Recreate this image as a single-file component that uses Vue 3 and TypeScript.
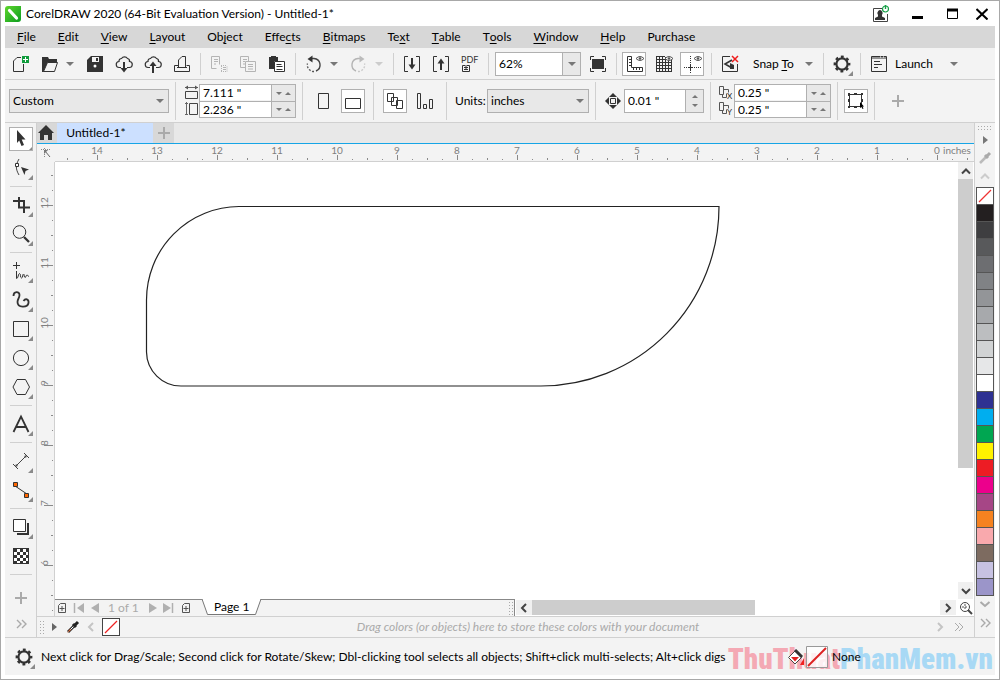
<script setup lang="ts">
import { ref } from 'vue'

const D = '#333'
const G = '#b4b4b4'

const eye = `<path d="M14 6.5q4-4 8 0q-4 4-8 0z" fill="#fff" stroke="#555"/><circle cx="18" cy="6.5" r="1.3" fill="#555"/>`
const gear = `<circle cx="13" cy="12" r="5.6" fill="none" stroke="${D}" stroke-width="2.2"/><circle cx="13" cy="12" r="7.2" fill="none" stroke="${D}" stroke-width="2.4" stroke-dasharray="2.83 2.83" stroke-dashoffset="1.4"/>`
const corner = `<path d="M24 19v5h-5z" fill="#8a8a8a"/>`
const cloud = `<path d="M10 15.500H8.500a3 3 0 0 1-.5-6a2.600 2.600 0 0 1 2.500-3a3.600 3.600 0 0 1 6 0a2.600 2.600 0 0 1 2 3a3 3 0 0 1-.5 6h-2" fill="none" stroke="${D}" stroke-width="1.200"/>`

const icons: Record<string, string> = {
  new: `<path d="M13 5.500H9L5.500 9v10.500h10V12" fill="none" stroke="${D}"/><path d="M14 4h7v7h-7z" fill="#109c3c"/><path d="M17.500 5v5M15 7.500h5" stroke="#fff"/>`,
  open: `<path d="M5 5h6l1 2h8v3.500H11L7 20H5z" fill="${D}"/><path d="M10.500 10.500h10l-3 9h-11z" fill="#f3f3f3" stroke="${D}"/>`,
  save: `<path d="M9 4h12v16H5V8z" fill="${D}"/><path d="M10 5h7v5h-7z" fill="#f3f3f3"/><path d="M14 6h2v3h-2z" fill="${D}"/><circle cx="13" cy="14" r="1.500" fill="#fff"/>`,
  cloudDown: cloud + `<path d="M13 10v8" stroke="${D}" stroke-width="2"/><path d="M9.500 16h7l-3.500 4.500z" fill="${D}"/>`,
  cloudUp: cloud + `<path d="M13 13v8" stroke="${D}" stroke-width="2"/><path d="M9.500 14h7L13 9.500z" fill="${D}"/>`,
  print: `<path d="M9.500 13.500h-4v6h15v-6h-3" fill="none" stroke="${D}"/><path d="M8 15.500h10" stroke="${D}"/><path d="M9.500 15V8l3.500-3.500h3.500V15" fill="#f3f3f3" stroke="${D}"/>`,
  cut: `<path d="M10.500 16.500h-5v-12h8v8M8 7.500h4M8 9.500h4M8 12h2" fill="none" stroke="${G}"/><path d="M15.500 14v6M21 14.500v6M15 19.500h6M15 13.500h6" stroke="${G}" stroke-dasharray="1 1"/><path d="M17 15.500h3M17 17.500h3" stroke="${G}"/>`,
  copy: `<path d="M10 15.500H5.500v-11h8V9M8 7.500h4M8 9.500h2M8 12h2M10.500 9.500h10v10h-10zM13 12.500h5M13 14.500h5M13 17h5" fill="none" stroke="${G}"/>`,
  paste: `<path d="M5 5h2V4h5v1h2v4h-4v8H5z" fill="${D}"/><path d="M10.500 9.500h10v10h-10z" fill="#fff" stroke="${D}"/><path d="M12.500 12.500h5M12.500 14.500h6M12.500 17.500h6" stroke="${D}"/>`,
  undo: `<path d="M9.500 6.500h3.500a6.500 6.500 0 0 1 2 12.500" fill="none" stroke="#444" stroke-width="1.400"/><path d="M13 19.500a6.500 6.500 0 0 1-6.500-8" fill="none" stroke="#555" stroke-width="1.300" stroke-dasharray="2 1.500"/><path d="M6.500 7l5-3.500v7z" fill="${D}"/>`,
  redo: `<path d="M15.500 6.500H12a6.500 6.500 0 0 0-2 12.500" fill="none" stroke="${G}" stroke-width="1.400"/><path d="M12 19.500a6.500 6.500 0 0 0 6.500-8" fill="none" stroke="#c8c8c8" stroke-width="1.300" stroke-dasharray="2 1.500"/><path d="M18.500 7l-5-3.500v7z" fill="#bbb"/>`,
  import: `<path d="M9 4.500H5.500v15H9M17 4.500h3.500v15H17" fill="none" stroke="${D}"/><path d="M13 6v9" stroke="${D}" stroke-width="2"/><path d="M9.500 12.500h7L13 17.500z" fill="${D}"/>`,
  export: `<path d="M9 4.500H5.500v15H9M17 4.500h3.500v15H17" fill="none" stroke="${D}"/><path d="M13 9v9" stroke="${D}" stroke-width="2"/><path d="M9.500 11.500h7L13 6.500z" fill="${D}"/>`,
  pdf: `<text x="4" y="11" font-size="9" fill="${D}">PDF</text><path d="M8 13.500H5.500v6h7v-6H10" fill="none" stroke="${D}"/><path d="M9 13v5M7 15.500h4M7 17.500h4" stroke="${D}"/>`,
  full: `<path d="M7 7h12v10H7z" fill="${D}"/><path d="M5.500 8V4.500H9M17 4.500h3.500V8M20.500 16v3.500H17M9 19.500H5.500V16" fill="none" stroke="${D}"/>`,
  rulers: `<path d="M5.500 4.500h4v11h11v4h-15z" fill="none" stroke="${D}"/><path d="M7 7.500h2M7 10.500h2M7 13.500h2M11.500 16v2M14.500 16v2M17.500 16v2" stroke="${D}"/>` + eye,
  grid: `<path d="M5 7.500h16M5 10.500h16M5 13.500h16M5 16.500h16M5 19.500h16M5.500 5v15M8.500 5v15M11.500 5v15M14.500 5v15M17.500 5v15M20.500 7v13M5 4.500h9" stroke="${D}"/>` + eye,
  guides: `<path d="M10.500 4v17M4 15.500h17" stroke="${D}" stroke-dasharray="1 1"/><path d="M8 15.500h5M10.500 13v5" stroke="${D}"/>` + eye,
  snapOff: `<path d="M13 4.500H5.500v15h15V12" fill="none" stroke="${D}"/><path d="M15 8l-7 4 7 4" fill="none" stroke="${D}" stroke-width="1.600"/><path d="M13 11l4 2v4h-4z" fill="${D}"/><path d="M15 4l6 6M21 4l-6 6" stroke="#ee1c1c" stroke-width="1.500"/>`,
  launch: `<path d="M5.500 4.500h15v15h-15z" fill="none" stroke="${D}"/><path d="M5 6h16M8 9.500h6M8 12.500h8M8 15.500h4" stroke="${D}"/><path d="M14 5h1M17 5h1" stroke="#fff"/>`,
  portrait: `<path d="M6.500 4.500h10v15h-10z" fill="none" stroke="${D}"/>`,
  landscape: `<path d="M4.500 9.500h15v10h-15z" fill="none" stroke="${D}"/>`,
  pages: `<path d="M4.500 4.500h6v8h-6zM8.500 8.500h6v8h-6zM13.500 11.500h6v8h-6z" fill="#fff" stroke="${D}"/>`,
  bars: `<path d="M5.500 4.500h3v15h-3zM11.500 15.500h3v4h-3zM17.500 10.500h3v9h-3z" fill="none" stroke="${D}"/>`,
  nudge: `<path d="M8.500 9.500h5v5h-5z" fill="none" stroke="${D}"/><path d="M11 4l4 4H7zM11 20l4-4H7zM3 12l4-4v8zM19 12l-4-4v8z" fill="${D}"/>`,
  bounds: `<path d="M5.500 5.500h12v12h-12z" fill="none" stroke="${D}"/><path d="M4 4h2v3H4zM17 4h2v2h-2zM4 17h2v2H4zM10 4h3v1h-3zM10 18h3v1h-3zM4 10h1v3H4zM18 10h1v3h-1z" fill="${D}"/><path d="M16 13l4 4.500h-1.500l1 2-1 .5-1-2-1.500 1z" fill="#000"/>`,
  plus: `<path d="M12 6v12M6 12h12" stroke="#aaa" stroke-width="2"/>`,
  pick: `<path d="M8 3l8.500 9.500h-3.800l2.300 5.500-2.500 1-2.300-5.500L8 16z" fill="${D}"/>` + corner,
  shape: `<path d="M10 3C6.500 9 6.500 13 10 19" fill="none" stroke="#444"/><path d="M6.500 7.500h3v3h-3z" fill="#fff" stroke="${D}"/><path d="M12 11l8 2.500-3.500 1.500-1 4z" fill="${D}"/>` + corner,
  crop: `<path d="M4 8h11v12M10 4v10.500h11M4 8h11" fill="none" stroke="${D}" stroke-width="2"/>` + corner,
  zoom: `<circle cx="10.500" cy="10" r="6.300" fill="none" stroke="${D}"/><path d="M15 15l5 5" stroke="${D}" stroke-width="2.300"/>` + corner,
  freehand: `<path d="M7.500 3v7M4 6.500h7" stroke="${D}"/><path d="M7.500 12v7.500c2 0 1.500-5 3-5s.5 4.500 2 4.500 1-4 2-4 .5 3.500 1.500 3.500 1-2.500 2-2.500 1 1.500 2 1.500" fill="none" stroke="${D}"/>` + corner,
  artistic: `<path d="M4.500 8c0-5 6-5 6-1 0 3-2 4-2 7 0 6 10 6 11 1 .5-4-3-5-5-2" fill="none" stroke="${D}" stroke-width="1.800"/>` + corner,
  rect: `<path d="M4.500 4.500h15v15h-15z" fill="none" stroke="${D}"/>` + corner,
  ellipse: `<circle cx="12" cy="12" r="7.600" fill="none" stroke="${D}"/>` + corner,
  polygon: `<path d="M8 4.500h8.500l4 7.500-4 7.500H8L4 12z" fill="none" stroke="${D}"/>` + corner,
  text: `<path d="M4.500 20L12 4.500 19.500 20M7.500 15h9" fill="none" stroke="${D}" stroke-width="1.800"/>` + corner,
  dimension: `<path d="M6.500 17.500l11-11M4 15l5 5M15 4l5 5" stroke="#444"/><path d="M6 18l1-3 2 2zM18 6l-3 1 2 2z" fill="#444"/>` + corner,
  connector: `<path d="M6 8l12 8" stroke="${D}"/><path d="M4.500 4.500h4v4h-4zM15.500 15.500h4v4h-4z" fill="#f60" stroke="${D}"/>` + corner,
  shadow: `<path d="M8 19h11V8" fill="none" stroke="${D}" stroke-width="2"/><path d="M4.500 4.500h12v12h-12z" fill="#fff" stroke="${D}"/>` + corner,
  pattern: `<path d="M4 4h16v16H4z" fill="${D}"/><path d="M8 5h3v3H8zM14 5h3v3h-3zM5 8h3v3H5zM11 8h3v3h-3zM17 8h2v3h-2zM8 11h3v3H8zM14 11h3v3h-3zM5 14h3v3H5zM11 14h3v3h-3zM17 14h2v3h-2zM8 17h3v2H8zM14 17h3v2h-3z" fill="#fff"/>`,
  more: `<path d="M8 8l4 4-4 4M13 8l4 4-4 4" fill="none" stroke="#aaa" stroke-width="1.400"/>`,
  moreDown: `<path d="M7.500 9l4.500 4 4.500-4" fill="none" stroke="#aaa" stroke-width="2"/>`,
  gear: gear + corner,
}

interface Tool { icon?: string; label?: string; caret?: boolean; dim?: boolean; boxed?: boolean }
const fileTools: Tool[] = [
  { icon: 'new', label: 'New' }, { icon: 'open', label: 'Open', caret: true }, { icon: 'save', label: 'Save' },
  { icon: 'cloudDown', label: 'Open from cloud' }, { icon: 'cloudUp', label: 'Save to cloud' }, { icon: 'print', label: 'Print' },
  {}, { icon: 'cut', label: 'Cut' }, { icon: 'copy', label: 'Copy' }, { icon: 'paste', label: 'Paste' },
  {}, { icon: 'undo', label: 'Undo', caret: true }, { icon: 'redo', label: 'Redo', caret: true, dim: true },
  {}, { icon: 'import', label: 'Import' }, { icon: 'export', label: 'Export' }, { icon: 'pdf', label: 'Publish to PDF' }, {},
]
const viewTools: Tool[] = [
  { icon: 'full', label: 'Full-screen preview' }, {},
  { icon: 'rulers', label: 'Show rulers', boxed: true }, { icon: 'grid', label: 'Show grid' }, { icon: 'guides', label: 'Show guidelines', boxed: true }, {},
  { icon: 'snapOff', label: 'Snap off' },
]
const toolbox = ['pick', 'shape', '', 'crop', 'zoom', '', 'freehand', 'artistic', 'rect', 'ellipse', 'polygon', '', 'text', '', 'dimension', 'connector', '', 'shadow', 'pattern', '']

const menus = ['_File', '_Edit', '_View', '_Layout', 'Ob_ject', 'Effe_cts', '_Bitmaps', 'Te_xt', '_Table', 'T_ools', '_Window', '_Help', 'Purchase'].map((m) => {
  const at = m.indexOf('_')
  return at < 0 ? { a: m, u: '', b: '' } : { a: m.slice(0, at), u: m[at + 1], b: m.slice(at + 2) }
})

const swatches = ['none', '#231f20', '#3e3e40', '#58595b', '#6d6e71', '#808285', '#939598', '#a7a9ac', '#bcbec0', '#d1d3d4', '#e6e7e8', '#ffffff', '#2e3192', '#00aeef', '#00a651', '#fff200', '#ed1c24', '#ec008c', '#a64686', '#f58220', '#f9a9ad', '#7d6b60', '#c7c2e2', '#9b95c9']

const zoomLevel = ref('62%')
const size = ref({ w: '7.111 "', h: '2.236 "' })
const offset = ref({ x: '0.25 "', y: '0.25 "' })
const nudge = ref('0.01 "')

const unit = 60
const hMajor = Array.from({ length: 15 }, (_, i) => ({ n: 14 - i, x: 42 + i * unit }))
const hMinor = Array.from({ length: 62 }, (_, i) => i).filter((i) => (i - 2) % 4 !== 0).map((i) => ({ x: 12 + i * 15, tall: i % 2 === 0 }))
const vMajor = Array.from({ length: 7 }, (_, i) => ({ n: 12 - i, y: 43 + i * unit }))
const vMinor = Array.from({ length: 31 }, (_, i) => i).filter((i) => (i - 2) % 4 !== 0).map((i) => ({ y: 13 + i * 15, tall: i % 2 === 0 }))
</script>

<template>
  <div class="window">
    <header class="title">
      <svg class="logo" viewBox="0 0 16 16" width="16" height="16">
        <defs><linearGradient id="lg" x1="0" y1="0" x2="1" y2="1"><stop offset="0" stop-color="#5fd62c" /><stop offset="1" stop-color="#0c9c20" /></linearGradient></defs>
        <path d="M3 0h13v13a3 3 0 0 1-3 3H0V3a3 3 0 0 1 3-3z" fill="url(#lg)" />
        <path d="M4.500 4.500l7 7.500" stroke="#fff" stroke-width="3.200" stroke-linecap="round" />
      </svg>
      <h1>CorelDRAW 2020 (64-Bit Evaluation Version) - Untitled-1*</h1>
      <button class="user" aria-label="Account">
        <svg width="18" height="18" viewBox="0 0 18 18"><path d="M10 3.500H1.500v13h14V9" fill="none" stroke="#444" /><path d="M3 15v-2l3-1.500V10a2.600 3 0 1 1 4 0v1.500l3 1.500v2z" fill="#333" /><circle cx="13.500" cy="4" r="3" fill="#fff" stroke="#18a048" stroke-width="1.200" /><path d="M13.500 0v4" stroke="#18a048" stroke-width="1.400" /></svg>
      </button>
      <button class="win min" aria-label="Minimize"><svg width="12" height="12"><path d="M0 9.500h11" stroke="#000" stroke-width="3" /></svg></button>
      <button class="win max" aria-label="Maximize"><svg width="12" height="12"><path d="M.5 1.500h10v9H.5z" fill="none" stroke="#000" /><path d="M0 2h11" stroke="#000" stroke-width="3" /></svg></button>
      <button class="win close" aria-label="Close"><svg width="12" height="12"><path d="M.5 1l11 10.500M11.500 1L.5 11.500" stroke="#000" stroke-width="2" /></svg></button>
    </header>

    <nav class="menubar">
      <button v-for="m in menus" :key="m.a + m.b">{{ m.a }}<u>{{ m.u }}</u>{{ m.b }}</button>
    </nav>

    <div class="toolbar">
      <template v-for="(t, i) in fileTools" :key="i">
        <i v-if="!t.icon" class="sep" />
        <template v-else>
          <button class="tool" :aria-label="t.label"><svg viewBox="0 0 24 24" v-html="icons[t.icon]" /></button>
          <button v-if="t.caret" class="caret" :class="{ dim: t.dim }" :aria-label="t.label + ' options'"><i /></button>
        </template>
      </template>
      <label class="zoombox">
        <input v-model="zoomLevel" aria-label="Zoom level" />
        <button aria-label="Zoom levels"><i class="tri" /></button>
      </label>
      <template v-for="(t, i) in viewTools" :key="'v' + i">
        <i v-if="!t.icon" class="sep" />
        <button v-else class="tool" :class="{ boxed: t.boxed }" :aria-label="t.label"><svg viewBox="0 0 24 24" v-html="icons[t.icon]" /></button>
      </template>
      <button class="wide snap"><span>Snap <u>T</u>o</span><i class="tri" /></button>
      <i class="sep" />
      <button class="tool" aria-label="Options"><svg viewBox="0 0 24 24" v-html="icons.gear" /></button>
      <i class="sep" />
      <button class="tool" aria-label="Application launcher"><svg viewBox="0 0 24 24" v-html="icons.launch" /></button>
      <button class="wide launch"><span>Launch</span><i class="tri" /></button>
    </div>

    <div class="props">
      <div class="pick preset"><select aria-label="Page size"><option>Custom</option></select><i class="tri" /></div>
      <i class="vline" />
      <div class="pair">
        <svg width="14" height="32" viewBox="0 0 14 32">
          <path d="M.5 6.500h12v7H.5zM4.500 18.500h8v11h-8z" fill="none" stroke="#444" />
          <path d="M0 2.500h13M1.500 17v13" stroke="#666" /><path d="M3 .5v4L0 2.500zM10 .5v4l3-2z" fill="#555" /><path d="M0 18.500h3M0 29.500h3" stroke="#666" />
        </svg>
        <div class="double">
          <div><input v-model="size.w" aria-label="Page width" /><span class="spin"><i class="tri s" /><i class="tri s up" /></span></div>
          <div><input v-model="size.h" aria-label="Page height" /><span class="spin"><i class="tri s" /><i class="tri s up" /></span></div>
        </div>
      </div>
      <i class="vline" />
      <button class="prop" aria-label="Portrait"><svg viewBox="0 0 24 24" v-html="icons.portrait" /></button>
      <button class="prop boxed" aria-label="Landscape"><svg viewBox="0 0 24 24" v-html="icons.landscape" /></button>
      <i class="vline" />
      <button class="prop boxed" aria-label="All pages"><svg viewBox="0 0 24 24" v-html="icons.pages" /></button>
      <button class="prop last" aria-label="Current page"><svg viewBox="0 0 24 24" v-html="icons.bars" /></button>
      <i class="vline" />
      <label class="units" for="units">Units:</label>
      <div class="pick unit"><select id="units"><option>inches</option></select><i class="tri" /></div>
      <i class="vline" />
      <svg class="nudge-icon" viewBox="0 0 22 24" v-html="icons.nudge" />
      <div class="single"><input v-model="nudge" aria-label="Nudge distance" /><span class="spin col"><i class="tri s up" /><i class="tri s" /></span></div>
      <i class="vline" />
      <div class="pair dup">
        <svg width="14" height="32" viewBox="0 0 14 32">
          <path v-for="k in [0, 16]" :key="k" fill="none" stroke="#555" :d="`M.5 ${k + 1.5}h4v8h-4zM4.500 ${k + 4.5}h5v3M3.500 ${k + 10}v2.500h4v-4`" />
          <text x="8" y="14" font-size="8" fill="#222">X</text><text x="8" y="30" font-size="8" fill="#222">Y</text>
        </svg>
        <div class="double">
          <div><input v-model="offset.x" aria-label="Duplicate distance X" /><span class="spin"><i class="tri s" /><i class="tri s up" /></span></div>
          <div><input v-model="offset.y" aria-label="Duplicate distance Y" /><span class="spin"><i class="tri s" /><i class="tri s up" /></span></div>
        </div>
      </div>
      <i class="vline" />
      <button class="prop boxed only" aria-label="Treat as filled"><svg viewBox="0 0 24 24" v-html="icons.bounds" /></button>
      <i class="vline" />
      <button class="prop add" aria-label="Customize"><svg viewBox="0 0 24 24" v-html="icons.plus" /></button>
    </div>

    <main class="work">
      <aside class="toolbox">
        <template v-for="(t, i) in toolbox" :key="i">
          <i v-if="!t" class="hline" />
          <button v-else :class="{ boxed: i === 0 }" :aria-label="t + ' tool'"><svg viewBox="0 0 24 24" v-html="icons[t]" /></button>
        </template>
        <button class="addtool" aria-label="Add tools"><svg viewBox="0 0 24 24" v-html="icons.plus" /></button>
        <button class="moretool" aria-label="More tools"><svg viewBox="0 0 24 24" v-html="icons.more" /></button>
      </aside>

      <section class="center">
        <div class="tabs">
          <button class="home" aria-label="Welcome"><svg width="20" height="20" viewBox="0 0 20 20"><path d="M9 2l8 8h-2v7h-4v-5H7v5H3v-7H1z" fill="#333" /></svg></button>
          <button class="doc">Untitled-1*</button>
          <button class="newtab" aria-label="New document"><svg width="20" height="20" viewBox="0 0 20 20"><path d="M10 4v12M4 10h12" stroke="#aaa" stroke-width="2" /></svg></button>
        </div>

        <div class="ruled">
          <div class="origin"><svg width="17" height="17" viewBox="0 0 17 17"><path d="M4 5.500h10M7.500 4v10" stroke="#888" stroke-dasharray="1 1" /><path d="M8 7l5 6" stroke="#666" /><path d="M7 6h4l-4 4z" fill="#777" /></svg></div>
          <div class="hruler">
            <svg width="100%" height="17">
              <g stroke="#8a8a8a" shape-rendering="crispEdges">
                <path v-for="t in hMajor" :key="'a' + t.n" :d="`M${t.x + 0.5} 11v5`" />
                <path v-for="t in hMinor" :key="'b' + t.x" :d="`M${t.x + 0.5} ${t.tall ? 14 : 15}v${t.tall ? 2 : 1}`" />
              </g>
              <text v-for="t in hMajor" :key="'t' + t.n" :x="t.x" y="10" text-anchor="middle">{{ t.n }}</text>
              <text x="888" y="10">inches</text>
            </svg>
          </div>
          <div class="vruler">
            <svg width="17" height="100%">
              <g stroke="#8a8a8a" shape-rendering="crispEdges">
                <path v-for="t in vMajor" :key="'a' + t.n" :d="`M7 ${t.y + 0.5}h9`" />
                <path v-for="t in vMinor" :key="'b' + t.y" :d="`M${t.tall ? 14 : 15} ${t.y + 0.5}h${t.tall ? 2 : 1}`" />
              </g>
              <text v-for="t in vMajor" :key="'t' + t.n" :transform="`translate(11 ${t.y - 2}) rotate(-90)`" text-anchor="middle">{{ t.n }}</text>
            </svg>
          </div>
          <div class="sheet">
            <svg class="drawing" width="100%" height="100%">
              <path d="M184 44.500H664A178 179.500 0 0 1 486 224H126A34.500 34.500 0 0 1 91.500 190V138A93 93.500 0 0 1 184 44.500Z" fill="none" stroke="#222" stroke-width="1.200" />
            </svg>
            <div class="vscroll">
              <button aria-label="Scroll up"><svg width="10" height="8"><path d="M1 6.500l4-4 4 4" /></svg></button>
              <div class="vthumb" /><div class="vrest" />
              <button aria-label="Scroll down"><svg width="10" height="8"><path d="M1 2l4 4 4-4" /></svg></button>
            </div>
          </div>
          <div class="pagebar">
            <div class="pagenav">
              <button aria-label="Add page before"><svg width="10" height="12"><path d="M3.500 1.500h5v9h-7v-7z" fill="none" stroke="#555" /><path d="M5 4v5M2.500 6.500h5" stroke="#555" /></svg></button>
              <button aria-label="First page"><svg width="12" height="12"><path d="M1.500 1v10" stroke="#b0b0b0" stroke-width="1.500" /><path d="M11 1v10L4 6z" fill="#b0b0b0" /></svg></button>
              <button aria-label="Previous page"><svg width="8" height="12"><path d="M8 1v10L0 6z" fill="#b0b0b0" /></svg></button>
              <span>1 of 1</span>
              <button aria-label="Next page"><svg width="8" height="12"><path d="M0 1v10l8-5z" fill="#b0b0b0" /></svg></button>
              <button aria-label="Last page"><svg width="12" height="12"><path d="M9.500 1v10" stroke="#b0b0b0" stroke-width="1.500" /><path d="M0 1v10l8-5z" fill="#b0b0b0" /></svg></button>
              <button aria-label="Add page after"><svg width="10" height="12"><path d="M3.500 1.500h5v9h-7v-7z" fill="none" stroke="#555" /><path d="M5 4v5M2.500 6.500h5" stroke="#555" /></svg></button>
              <button class="pagetab">
                <svg width="60" height="17" viewBox="0 0 60 17"><path d="M0 0L5.500 15.500H53.500L59 0" fill="#fff" stroke="#777" /></svg>
                <span>Page 1</span>
              </button>
              <i class="grip" />
            </div>
            <div class="hscroll">
              <button aria-label="Scroll left"><svg width="8" height="10"><path d="M6 1L2 5l4 4" /></svg></button>
              <div class="hthumb" /><div class="hrest" />
              <button aria-label="Scroll right"><svg width="8" height="10"><path d="M2 1l4 4-4 4" /></svg></button>
            </div>
            <button class="navigator" aria-label="Navigator"><svg width="14" height="14"><circle cx="6" cy="6" r="4.500" fill="none" stroke="#444" /><path d="M6 3v6M3 6h6" stroke="#555" stroke-dasharray="2 1" /><path d="M9 9l4 4" stroke="#444" stroke-width="2" /></svg></button>
          </div>
        </div>

        <div class="docpalette">
          <i class="grip" />
          <button aria-label="Palette menu"><svg width="5" height="8"><path d="M0 0v8l5-4z" fill="#666" /></svg></button>
          <button class="dropper" aria-label="Eyedropper"><svg width="14" height="14" viewBox="0 0 14 14"><path d="M2 12l7-7" stroke="#333" stroke-width="3" /><path d="M2.500 11.500l6-6" stroke="#fff" /><path d="M1 13l4-3-1-1z" fill="#e05a20" /><path d="M7 4l3 3M9 5l3-3" stroke="#222" stroke-width="3" /></svg></button>
          <button aria-label="Previous colors"><svg width="8" height="10"><path d="M6 1L2 5l4 4" fill="none" stroke="#c4c4c4" stroke-width="2" /></svg></button>
          <button class="nocolor" aria-label="No color"><svg width="16" height="16"><path d="M2 14L14 2" stroke="#ee2222" stroke-width="1.200" /></svg></button>
          <em>Drag colors (or objects) here to store these colors with your document</em>
          <button aria-label="Next colors"><svg width="8" height="10"><path d="M2 1l4 4-4 4" fill="none" stroke="#c4c4c4" stroke-width="2" /></svg></button>
          <button class="expand" aria-label="Expand palette"><svg width="10" height="8"><path d="M1 0l4 4-4 4M5 0l4 4-4 4" fill="none" stroke="#aaa" /></svg></button>
        </div>
      </section>

      <aside class="palette">
        <i class="grip flat" />
        <button aria-label="Palette options"><svg width="5" height="8"><path d="M0 0v8l5-4z" fill="#777" /></svg></button>
        <button aria-label="Pick a color"><svg width="14" height="14"><path d="M2 12l7-7" stroke="#bbb" stroke-width="2.500" /><path d="M7 4l3 3M9 5l3-3" stroke="#aaa" stroke-width="3" /></svg></button>
        <button aria-label="Scroll colors up"><svg width="10" height="8"><path d="M1 6.500l4-4 4 4" fill="none" stroke="#ccc" stroke-width="2" /></svg></button>
        <div class="swatches">
          <button v-for="c in swatches" :key="c" :aria-label="'Color ' + c" :style="{ backgroundColor: c === 'none' ? '#fff' : c }">
            <svg v-if="c === 'none'" width="16" height="16"><path d="M2 14L14 2" stroke="#ee3333" stroke-width="1.200" /></svg>
          </button>
        </div>
        <button class="palend" aria-label="Scroll colors down"><svg viewBox="0 0 24 24" v-html="icons.moreDown" /></button>
        <button class="palend" aria-label="Expand colors"><svg viewBox="0 0 24 24" v-html="icons.more" /></button>
      </aside>
    </main>

    <footer class="status">
      <span class="watermark"><b>ThuThuat</b><b class="blue">PhanMem.vn</b></span>
      <button aria-label="Status options"><svg viewBox="0 0 24 24" v-html="icons.gear" /></button>
      <p>Next click for Drag/Scale; Second click for Rotate/Skew; Dbl-clicking tool selects all objects; Shift+click multi-selects; Alt+click digs</p>
      <div class="fill">
        <svg width="16" height="16"><path d="M7 2l6.500 6.500L7 15 .5 8.500z" fill="#fff" stroke="#444" /><path d="M7 1l7 7" stroke="#333" stroke-width="3" /><path d="M3 8h8l-4 4.500z" fill="#e02020" /><path d="M16 9v7h-4z" fill="#f02020" /></svg>
        <svg width="22" height="22"><path d="M.5.5h21v21H.5z" fill="#fff" fill-opacity=".8" stroke="#999" /><path d="M2 20L20 2" stroke="#d22" stroke-width="2" /></svg>
        <span>None</span>
      </div>
    </footer>
  </div>
</template>

<style>
body { margin: 0; background: #fff; }
</style>

<style scoped>
.window { --edge: #d0d0d0; --box: #b0b0b0; box-sizing: border-box; height: 100vh; min-height: 600px; padding: 0 4px 4px; border: 1px solid #a8a8a8; background: #fff; display: flex; flex-direction: column; font: 12px/16px Lato, "Open Sans", sans-serif; color: #000; overflow: hidden; }
* { box-sizing: border-box; }
button { appearance: none; border: 0; padding: 0; margin: 0; background: none; font: inherit; color: inherit; display: flex; align-items: center; justify-content: center; flex: none; }
input, select { appearance: none; font: inherit; color: inherit; border: 0; border-radius: 0; background: #fff; padding: 0 3px; margin: 0; min-width: 0; outline: 0; }
svg { display: block; flex: none; }
u { text-underline-offset: 2px; }

.title { height: 25px; flex: none; display: flex; align-items: center; }
.title h1 { font: inherit; margin: 0 auto 0 5px; }
.title .user { margin-right: 22px; }
.title .min { margin-right: 23px; }
.title .max { margin-right: 17px; }
.title .close { margin-right: 7px; }

.menubar { height: 22px; flex: none; background: #d7d7d7; display: flex; align-items: center; gap: 22px; padding-left: 12px; }

.toolbar { height: 32px; flex: none; background: #f3f3f3; border-bottom: 1px solid var(--edge); display: flex; align-items: center; padding-left: 1px; }
.tool { width: 29px; height: 24px; padding: 0 3px 0 2px; }
.tool svg, .prop svg, .toolbox svg, .status button svg { width: 24px; height: 24px; }
.boxed svg { background: #fff; outline: 1px solid var(--box); outline-offset: -1px; }
.sep { width: 8px; height: 22px; flex: none; background: linear-gradient(var(--edge), var(--edge)) 4px 0 / 1px 100% no-repeat; }
.caret { width: 16px; height: 24px; padding-left: 2px; justify-content: flex-start; }
.tri, .caret i { width: 0; height: 0; flex: none; border: 4px solid transparent; border-top-color: #777; border-bottom: 0; }
.caret.dim i { border-top-color: #ccc; }
.zoombox { width: 86px; height: 24px; margin: 0 2px 0 3px; border: 1px solid var(--box); display: flex; }
.zoombox input { flex: 1; width: 0; }
.zoombox button { width: 18px; background: #e8e8e8; border-left: 1px solid var(--box); }
.wide { justify-content: space-between; height: 24px; white-space: nowrap; }
.snap { width: 60px; margin: 0 6px 0 9px; }
.launch { width: 63px; margin-left: 2px; }

.props { height: 43px; flex: none; background: #f3f3f3; border-bottom: 1px solid var(--edge); display: flex; align-items: center; padding-left: 4px; }
.vline { width: 1px; height: 38px; flex: none; background: var(--edge); margin: 0 6px; }
.pick { height: 24px; border: 1px solid var(--box); background: #e8e8e8; display: flex; align-items: center; padding-right: 4px; flex: none; }
.pick select { flex: 1; height: 22px; background: transparent; }
.preset { width: 160px; }
.unit { width: 102px; margin-left: 3px; }
.pair { display: flex; align-items: center; padding-left: 3px; }
.dup { padding-left: 2px; gap: 1px; }
.double { width: 97px; border: 1px solid var(--box); }
.double div { display: flex; height: 16px; }
.double div + div { border-top: 1px solid var(--box); }
.double input { flex: 1; width: 0; height: 15px; line-height: 15px; }
.spin { width: 24px; flex: none; display: flex; align-items: center; justify-content: space-evenly; background: #e8e8e8; border-left: 1px solid var(--box); }
.spin.col { width: 18px; flex-direction: column; }
.tri.s { border-width: 3px; border-bottom-width: 0; }
.tri.s.up { transform: rotate(180deg); }
.prop { width: 24px; margin: 0 2px 0 3px; }
.prop.last { margin-right: 4px; }
.prop.only { margin: 0; }
.prop.add { margin-left: 5px; }
.units { margin-left: 2px; width: 29px; white-space: nowrap; }
.nudge-icon { width: 22px; height: 24px; }
.single { width: 80px; height: 24px; border: 1px solid var(--box); display: flex; flex: none; }
.single input { flex: 1; width: 0; }

.work { flex: 1; min-height: 0; display: grid; grid-template: minmax(0, 1fr) / 32px minmax(0, 1fr) 21px; background: #f3f3f3; border-bottom: 1px solid var(--edge); }
.toolbox { border-right: 1px solid var(--edge); display: flex; flex-direction: column; align-items: center; padding-top: 1px; overflow: hidden; }
.toolbox button { height: 29px; width: 31px; }
.hline { width: 22px; height: 8px; flex: none; background: linear-gradient(var(--edge), var(--edge)) 0 4px / 100% 1px no-repeat; }
.toolbox .addtool { margin-top: 5px; }
.toolbox .moretool { height: 24px; }
.center { display: flex; flex-direction: column; min-width: 0; min-height: 0; }
.tabs { height: 21px; flex: none; background: #e8e8e8; border-bottom: 1px solid #16a5e6; display: flex; }
.home { width: 20px; background: #d8d8d8; }
.doc { width: 96px; background: #cce0ff; padding-right: 18px; }
.newtab { width: 21px; background: #d8d8d8; }
.ruled { flex: 1; min-height: 0; display: grid; grid-template: 18px minmax(0, 1fr) 17px / 18px minmax(0, 1fr); }
.ruled text { font-size: 10px; fill: #808080; }
.hruler { border-bottom: 1px solid var(--edge); overflow: hidden; }
.vruler { grid-row: 2 / 4; border-right: 1px solid var(--edge); overflow: hidden; }
.sheet { background: #fff; display: flex; min-height: 0; }
.drawing { flex: 1; width: 0; }
.vscroll { width: 15px; margin-right: 1px; flex: none; display: flex; flex-direction: column; }
.vscroll button { height: 17px; background: #f0f0f0; }
.vscroll path, .hscroll path { fill: none; stroke: #444; stroke-width: 2; }
.vthumb { flex: 289; background: #cdcdcd; }
.vrest { flex: 114; }
.pagebar { display: flex; background: #fff; }
.pagenav { width: 50.1%; background: #f3f3f3; border-top: 1px solid #888; border-right: 1px solid #888; display: flex; align-items: center; gap: 6px; padding-left: 2px; color: #aaa; }
.pagenav > span { white-space: nowrap; padding: 0 4px 0 3px; }
.pagetab { position: relative; height: 16px; margin-left: 5px; color: #000; align-self: flex-start; }
.pagetab svg { margin-top: -1px; }
.pagetab span { position: absolute; inset: -1px 0 0; line-height: 16px; }
.grip { width: 6px; height: 14px; flex: none; background: radial-gradient(circle, #aaa 1px, transparent 1px) 0 0 / 3px 3px; }
.grip.flat { width: 16px; height: 6px; }
.pagenav .grip { margin-left: auto; }
.hscroll { flex: 1; margin: 1px 2px 1px 1px; display: flex; }
.hscroll button { width: 16px; background: #f0f0f0; }
.hthumb { flex: 222; background: #cdcdcd; }
.hrest { flex: 185; }
.navigator { width: 15px; margin-right: 1px; }
.docpalette { height: 21px; flex: none; border-top: 1px solid var(--edge); display: flex; align-items: center; gap: 7px; padding: 0 10px 0 2px; }
.docpalette .dropper { margin-left: 2px; }
.docpalette .expand { margin-left: 3px; }
.docpalette em { flex: 1; text-align: center; color: #aaa; white-space: nowrap; }
.nocolor { width: 18px; height: 18px; background: #fff; border: 1px solid #444; }
.palette { border-left: 1px solid var(--edge); display: flex; flex-direction: column; align-items: center; overflow: hidden; }
.palette > .grip { margin: 2px 0 0; }
.palette > button { height: 18px; }
.swatches { display: flex; flex-direction: column; border: 1px solid #555; border-bottom: 0; margin-top: 2px; flex: none; }
.swatches button { width: 16px; height: 17px; border-bottom: 1px solid #555; }
.palette .palend svg { width: 24px; height: 24px; }

.status { position: relative; height: 37px; flex: none; background: #f3f3f3; display: flex; align-items: center; padding-left: 6px; }
.status p { margin: 0 0 0 6px; white-space: nowrap; position: relative; flex: 1; min-width: 0; }
.fill { display: flex; align-items: center; gap: 2px; position: relative; width: 207px; flex: none; }
.fill span { margin-left: 2px; }
.watermark { position: absolute; right: 2px; bottom: 0; font: bold 29px/32px "Liberation Sans Narrow", "Roboto Condensed", Roboto, sans-serif; color: #f4a9b4; }
.watermark .blue { color: #a8d9f5; }
</style>
